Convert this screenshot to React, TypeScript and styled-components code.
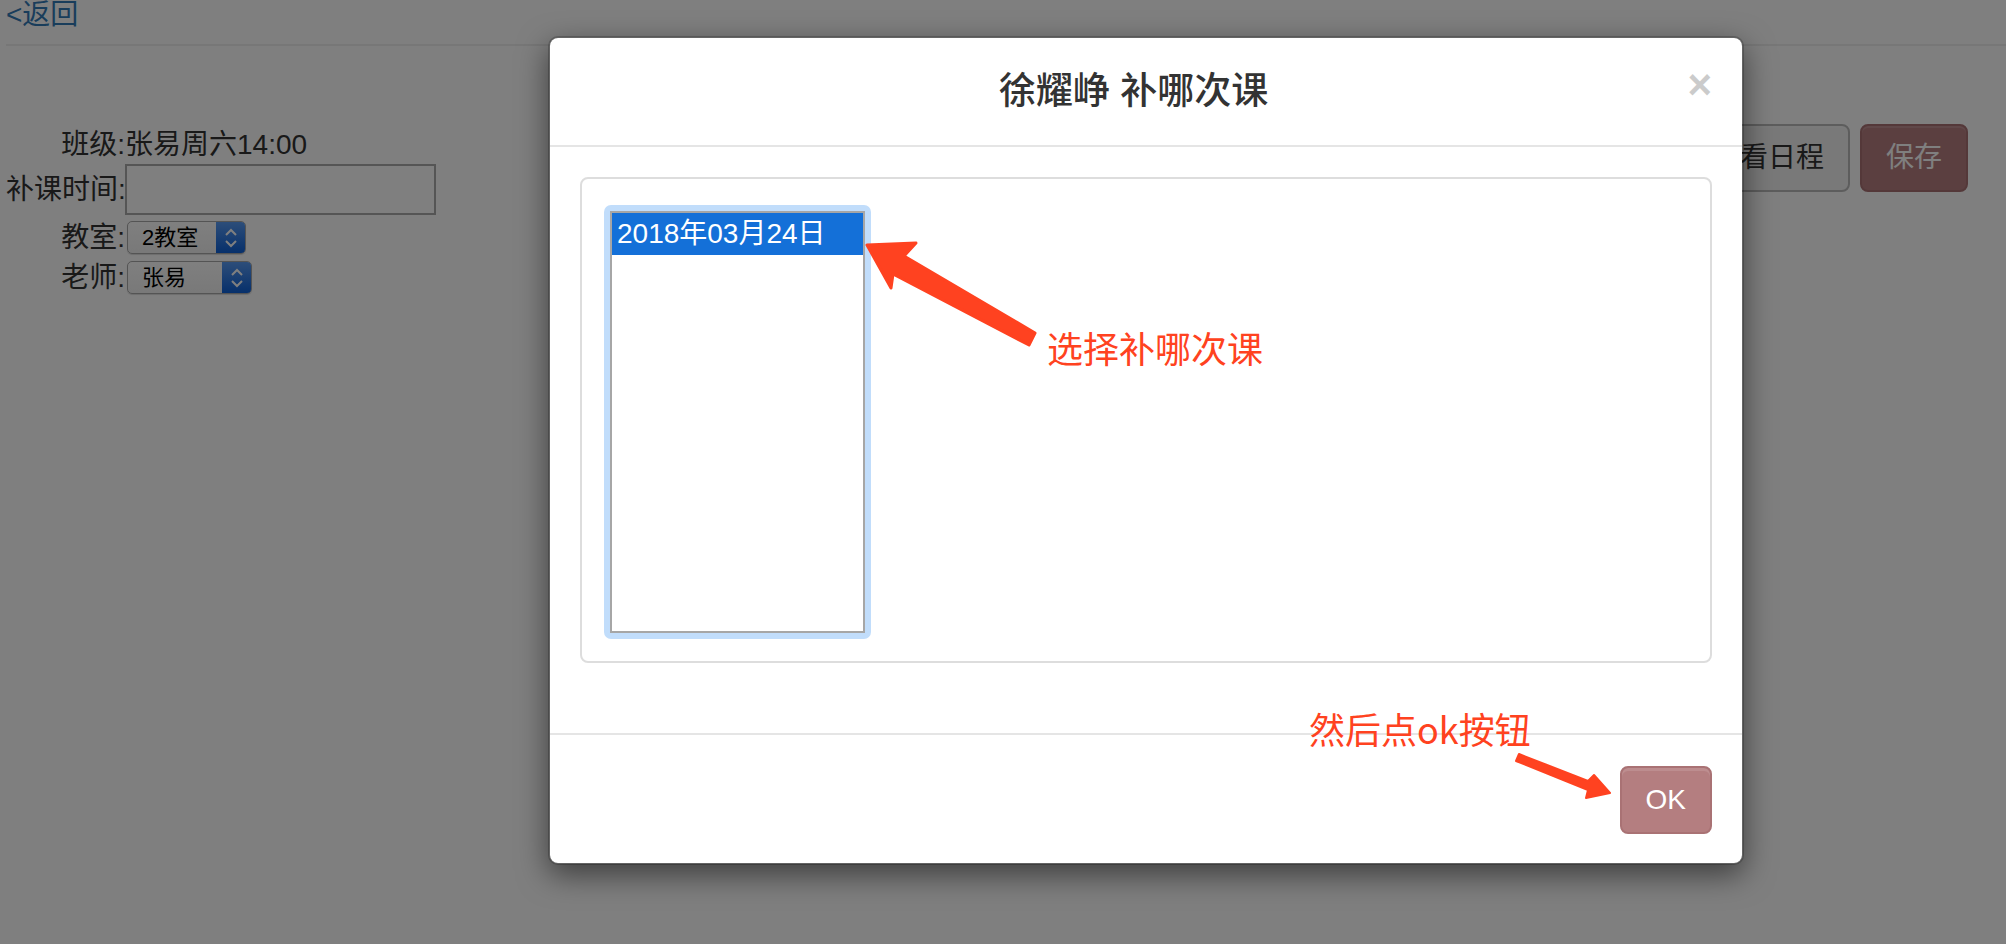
import * as React from 'react';
import styled, {createGlobalStyle} from "styled-components";

const GlobalStyle = createGlobalStyle`
  html, body {
    margin: 0;
    padding: 0;
    background: #fff;
  }
  body {
    font-family: "Liberation Sans", "Noto Sans CJK SC", sans-serif;
    font-size: 28px;
    color: #333;
  }
`;

const CJK = `"Liberation Sans", "Noto Sans CJK SC", sans-serif`;

const Screen = styled.div`
  position: relative;
  width: 2006px;
  height: 944px;
  overflow: hidden;
`;

const Page = styled.div`
  padding: 0 38px 0 6px;
`;

const BackLink = styled.a`
  display: block;
  color: #337ab7;
  font-size: 28px;
  line-height: 31px;
  margin-top: -1px;
  text-decoration: none;
`;

const Divider = styled.div`
  height: 2px;
  margin: 14px -38px 0 0;
  background: #eee;
`;

const Content = styled.div`
  display: flex;
  justify-content: space-between;
  align-items: flex-start;
  margin-top: 78px;
`;

const Form = styled.div`
  display: flex;
  flex-direction: column;
`;

const Row = styled.div<{ $gap?: number; $height: number }>`
  display: flex;
  align-items: center;
  margin-top: ${p => p.$gap || 0}px;
  height: ${p => p.$height}px;
`;

const Label = styled.div`
  width: 119px;
  text-align: right;
  white-space: nowrap;
  line-height: 33px;
`;

const Value = styled.div`
  line-height: 33px;
`;

const TextInput = styled.div`
  box-sizing: border-box;
  width: 311px;
  height: 51px;
  border: 2px solid #aaa;
  background: #fff;
`;

const NativeSelect = styled.div<{ $width: number }>`
  box-sizing: border-box;
  display: flex;
  align-items: stretch;
  width: ${p => p.$width}px;
  height: 33px;
  margin-left: 2px;
  border: 1px solid #a8a8a8;
  border-radius: 5px;
  overflow: hidden;
  background: linear-gradient(#fff, #f2f2f2);
  box-shadow: 0 1px 1px rgba(0, 0, 0, 0.15);
`;

const SelectText = styled.div`
  flex: 1;
  padding-left: 14px;
  font-size: 22px;
  line-height: 31px;
  color: #000;
`;

const SelectArrow = styled.div`
  width: 29px;
  display: flex;
  align-items: center;
  justify-content: center;
  background: linear-gradient(#5a9cf3, #0d5fd6);
`;

const Actions = styled.div`
  display: flex;
  gap: 10px;
`;

const Button = styled.button<{ $primary?: boolean }>`
  box-sizing: border-box;
  height: 68px;
  padding: 12px 24px;
  font-family: ${CJK};
  font-size: 28px;
  line-height: 40px;
  border-radius: 8px;
  border: 2px solid ${p => (p.$primary ? '#a87173' : '#bbb')};
  background: ${p => (p.$primary ? '#b67e80' : '#f2f2f2')};
  color: ${p => (p.$primary ? '#fff' : '#333')};
  box-shadow: inset 0 2px 0 rgba(255, 255, 255, 0.15);
`;

const Backdrop = styled.div`
  position: absolute;
  inset: 0;
  background: rgba(0, 0, 0, 0.5);
`;

const Modal = styled.div`
  position: absolute;
  top: 36px;
  left: 548px;
  width: 1196px;
  box-sizing: border-box;
  background: #fff;
  background-clip: padding-box;
  border: 2px solid rgba(0, 0, 0, 0.2);
  border-radius: 10px;
  box-shadow: 0 10px 30px rgba(0, 0, 0, 0.5);
`;

const ModalHeader = styled.div`
  display: flex;
  align-items: flex-start;
  padding: 28px 30px;
  border-bottom: 2px solid #e5e5e5;
`;

const ModalTitle = styled.h4`
  flex: 1;
  margin: 0;
  text-align: center;
  font-family: ${CJK};
  font-size: 37px;
  font-weight: 500;
  line-height: 51px;
  color: #333;
`;

const Close = styled.span`
  margin-top: -2px;
  font-family: "Liberation Sans", sans-serif;
  font-size: 42px;
  font-weight: bold;
  line-height: 1;
  color: #000;
  opacity: 0.2;
`;

const ModalBody = styled.div`
  padding: 30px;
`;

const Panel = styled.div`
  margin-bottom: 40px;
  padding: 26px 22px 22px;
  border: 2px solid #ddd;
  border-radius: 8px;
`;

const FocusRing = styled.div`
  display: inline-block;
  padding: 6px;
  border-radius: 7px;
  background: #c1ddfb;
`;

const ListBox = styled.div`
  box-sizing: border-box;
  width: 255px;
  height: 422px;
  border: 2px solid #a6a6a6;
  background: #fff;
`;

const Option = styled.div<{ $selected?: boolean }>`
  height: 42px;
  padding-left: 5px;
  font-size: 28px;
  line-height: 42px;
  background: ${p => (p.$selected ? '#1470d8' : 'transparent')};
  color: ${p => (p.$selected ? '#fff' : '#000')};
`;

const ModalFooter = styled.div`
  display: flex;
  justify-content: flex-end;
  padding: 31px 30px 29px;
  border-top: 2px solid #e5e5e5;
`;

const OkButton = styled(Button)`
  font-family: "Liberation Sans", sans-serif;
  background: #b47e80;
  border-color: #a97274;
  color: #fff;
  box-shadow: inset 0 3px 0 rgba(255, 255, 255, 0.12);
`;

const Arrows = styled.svg`
  position: absolute;
  left: 0;
  top: 0;
  pointer-events: none;
`;

const Note = styled.div<{ $x: number; $y: number }>`
  position: absolute;
  left: ${p => p.$x}px;
  top: ${p => p.$y}px;
  font-family: "Noto Sans CJK SC", "Liberation Sans", sans-serif;
  font-size: 36px;
  line-height: 36px;
  white-space: nowrap;
  color: #ff4220;
`;

const Chevrons = () => (
    <svg width="14" height="22" viewBox="0 0 14 22">
        <path d="M2 8 L7 3 L12 8 M2 14 L7 19 L12 14" fill="none" stroke="#fff" strokeWidth="2"/>
    </svg>
);

class App extends React.Component {
    public render() {
        return (
            <Screen>
                <GlobalStyle/>
                <Page>
                    <BackLink>&lt;返回</BackLink>
                    <Divider/>
                    <Content>
                        <Form>
                            <Row $height={40}>
                                <Label>班级:</Label>
                                <Value>张易周六14:00</Value>
                            </Row>
                            <Row $height={51}>
                                <Label>补课时间:</Label>
                                <TextInput/>
                            </Row>
                            <Row $gap={6} $height={33}>
                                <Label>教室:</Label>
                                <NativeSelect $width={119}>
                                    <SelectText>2教室</SelectText>
                                    <SelectArrow><Chevrons/></SelectArrow>
                                </NativeSelect>
                            </Row>
                            <Row $gap={7} $height={33}>
                                <Label>老师:</Label>
                                <NativeSelect $width={125}>
                                    <SelectText>张易</SelectText>
                                    <SelectArrow><Chevrons/></SelectArrow>
                                </NativeSelect>
                            </Row>
                        </Form>
                        <Actions>
                            <Button>查看日程</Button>
                            <Button $primary>保存</Button>
                        </Actions>
                    </Content>
                </Page>

                <Backdrop/>

                <Modal>
                    <ModalHeader>
                        <ModalTitle>徐耀峥 补哪次课</ModalTitle>
                        <Close>×</Close>
                    </ModalHeader>
                    <ModalBody>
                        <Panel>
                            <FocusRing>
                                <ListBox>
                                    <Option $selected>2018年03月24日</Option>
                                </ListBox>
                            </FocusRing>
                        </Panel>
                    </ModalBody>
                    <ModalFooter>
                        <OkButton $primary>OK</OkButton>
                    </ModalFooter>
                </Modal>

                <Arrows width="2006" height="944" viewBox="0 0 2006 944">
                    <polygon
                        points="867,245 916,243 904,256 1035,333 1029,345 893,274 891,288"
                        fill="#ff4220" stroke="#ff4220" strokeWidth="3" strokeLinejoin="round"/>
                    <polygon
                        points="1519,754 1588,781 1594,775 1610,793 1586,798 1588,790 1516,761"
                        fill="#ff4220" stroke="#ff4220" strokeWidth="2" strokeLinejoin="round"/>
                </Arrows>
                <Note $x={1047} $y={329}>选择补哪次课</Note>
                <Note $x={1309} $y={710}>然后点ok按钮</Note>
            </Screen>
        );
    }
}

export default App;
